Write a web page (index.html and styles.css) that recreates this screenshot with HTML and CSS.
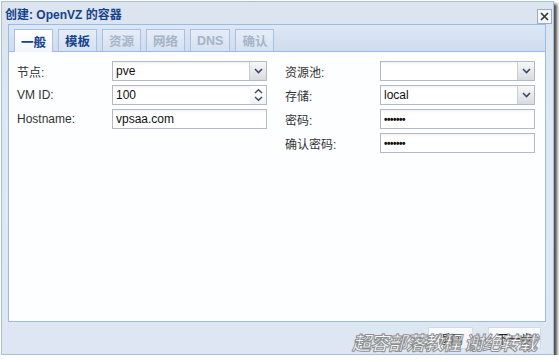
FILE: index.html
```html
<!DOCTYPE html>
<html lang="zh-CN">
<head>
    <meta charset="UTF-8">
    <title>创建: OpenVZ 的容器</title>
    <link rel="stylesheet" href="styles.css">
</head>
<body>
    <div class="window">
        <div class="header">
            <span class="title">创建: OpenVZ 的容器</span>
            <span class="close">
                <svg width="13" height="13" viewBox="0 0 13 13"><path d="M3 3 L10 10 M10 3 L3 10" stroke="#333" stroke-width="1.6" fill="none"/></svg>
            </span>
        </div>
        <div class="tabpanel">
            <div class="tabbar">
                <div class="tab active">一般</div>
                <div class="tab">模板</div>
                <div class="tab off">资源</div>
                <div class="tab off">网络</div>
                <div class="tab off">DNS</div>
                <div class="tab off">确认</div>
            </div>
            <div class="tabbody">
                <div class="col">
                    <div class="row">
                        <label>节点:</label>
                        <div class="field combo"><span class="val">pve</span><span class="trigger"><svg width="9" height="6" viewBox="0 0 9 6"><path d="M1 1 L4.5 4.5 L8 1" stroke="#3a4a63" stroke-width="1.6" fill="none"/></svg></span></div>
                    </div>
                    <div class="row">
                        <label>VM ID:</label>
                        <div class="field combo"><span class="val">100</span><span class="spin"><svg width="9" height="14" viewBox="0 0 9 14"><path d="M1 5 L4.5 1.8 L8 5 M1 9 L4.5 12.2 L8 9" stroke="#3a4a63" stroke-width="1.5" fill="none"/></svg></span></div>
                    </div>
                    <div class="row">
                        <label>Hostname:</label>
                        <div class="field"><span class="val">vpsaa.com</span></div>
                    </div>
                </div>
                <div class="col">
                    <div class="row">
                        <label>资源池:</label>
                        <div class="field combo"><span class="val"></span><span class="trigger"><svg width="9" height="6" viewBox="0 0 9 6"><path d="M1 1 L4.5 4.5 L8 1" stroke="#3a4a63" stroke-width="1.6" fill="none"/></svg></span></div>
                    </div>
                    <div class="row">
                        <label>存储:</label>
                        <div class="field combo"><span class="val">local</span><span class="trigger"><svg width="9" height="6" viewBox="0 0 9 6"><path d="M1 1 L4.5 4.5 L8 1" stroke="#3a4a63" stroke-width="1.6" fill="none"/></svg></span></div>
                    </div>
                    <div class="row">
                        <label>密码:</label>
                        <div class="field"><span class="val dots">•••••••</span></div>
                    </div>
                    <div class="row">
                        <label>确认密码:</label>
                        <div class="field"><span class="val dots">•••••••</span></div>
                    </div>
                </div>
            </div>
        </div>
        <div class="footer">
            <div class="btn">返回</div>
            <div class="btn">下一步</div>
        </div>
        <div class="watermark">超容部落教程 谢绝转载</div>
    </div>
</body>
</html>
```

FILE: styles.css
```css
body {
    margin: 0;
    background: #ffffff;
    font-family: "Liberation Sans", "Noto Sans CJK SC", sans-serif;
    font-size: 12px;
    color: #222;
}

.window {
    position: relative;
    margin: 1px 0 0 1px;
    width: 551px;
    height: 352px;
    border: 1px solid #a9bfd6;
    background: linear-gradient(#dbe4ef, #dfe7f2 40%, #dde6f2);
    box-shadow: 3px 3px 3px rgba(40, 40, 40, 0.85);
    display: flex;
    flex-direction: column;
}

.header {
    height: 22px;
    display: flex;
    align-items: center;
    justify-content: space-between;
    padding: 0 1px 0 3px;
}

.title {
    font-weight: bold;
    color: #15428b;
    font-size: 12px;
}

.close {
    width: 13px;
    height: 13px;
    border: 1px solid #9aaec8;
    background: #f4f7fb;
    display: flex;
    margin-top: 6px;
}

.tabpanel {
    margin: 0 7px 0 6px;
    height: 296px;
    border: 1px solid #99bbe8;
    display: flex;
    flex-direction: column;
    background: #ffffff;
}

.tabbar {
    height: 26px;
    display: flex;
    align-items: flex-end;
    gap: 5px;
    padding-left: 5px;
    background: linear-gradient(#dde8f6, #cfdcee);
    border-bottom: 1px solid #99bbe8;
}

.tab {
    height: 21px;
    padding: 0 6px;
    display: flex;
    align-items: center;
    font-weight: bold;
    font-size: 12.5px;
    color: #15428b;
    background: linear-gradient(#e6edf7, #d5e1f1);
    border: 1px solid #a9c1e0;
    border-bottom: none;
}

.tab.active {
    background: linear-gradient(#ffffff, #f1f5fb);
    height: 22px;
    margin-bottom: -1px;
    padding: 0 6px;
}

.tab.off {
    color: #a5b4c7;
}

.tabbody {
    flex: 1;
    display: flex;
    padding: 9px 0 0 8px;
    gap: 18px;
    background: #fdfeff;
}

.col {
    display: flex;
    flex-direction: column;
    gap: 4px;
}

.row {
    display: flex;
    align-items: center;
    height: 20px;
}

.row label {
    width: 95px;
    color: #333;
}

.field {
    width: 153px;
    height: 18px;
    border: 1px solid #b5b8c8;
    background: linear-gradient(#f2f2f2, #ffffff 3px);
    display: flex;
    align-items: center;
}

.val {
    flex: 1;
    padding-left: 3px;
    color: #111;
}

.dots {
    font-size: 10px;
    font-weight: bold;
    letter-spacing: -0.5px;
}

.trigger,
.spin {
    width: 16px;
    height: 18px;
    display: flex;
    align-items: center;
    justify-content: center;
    background: linear-gradient(#f7f7f7, #d8dbe0);
    border-left: 1px solid #c8cbd2;
}

.spin {
    background: linear-gradient(#ffffff, #f0f2f5);
    border-left: none;
}

.footer {
    flex: 1;
    display: flex;
    justify-content: flex-end;
    align-items: center;
    gap: 15px;
    padding-right: 12px;
}

.btn {
    height: 20px;
    width: 43px;
    border: 1px solid #d4dbe5;
    background: linear-gradient(#fbfcfe, #eef2f8);
    display: flex;
    align-items: center;
    justify-content: center;
    color: #222;
}

.btn + .btn {
    width: 51px;
}

.watermark {
    position: absolute;
    left: 350px;
    top: 326px;
    font-size: 19px;
    font-weight: bold;
    font-style: italic;
    letter-spacing: -1px;
    color: rgba(255, 255, 255, 0.7);
    -webkit-text-stroke: 1px rgba(110, 110, 110, 0.75);
    white-space: nowrap;
}
```
